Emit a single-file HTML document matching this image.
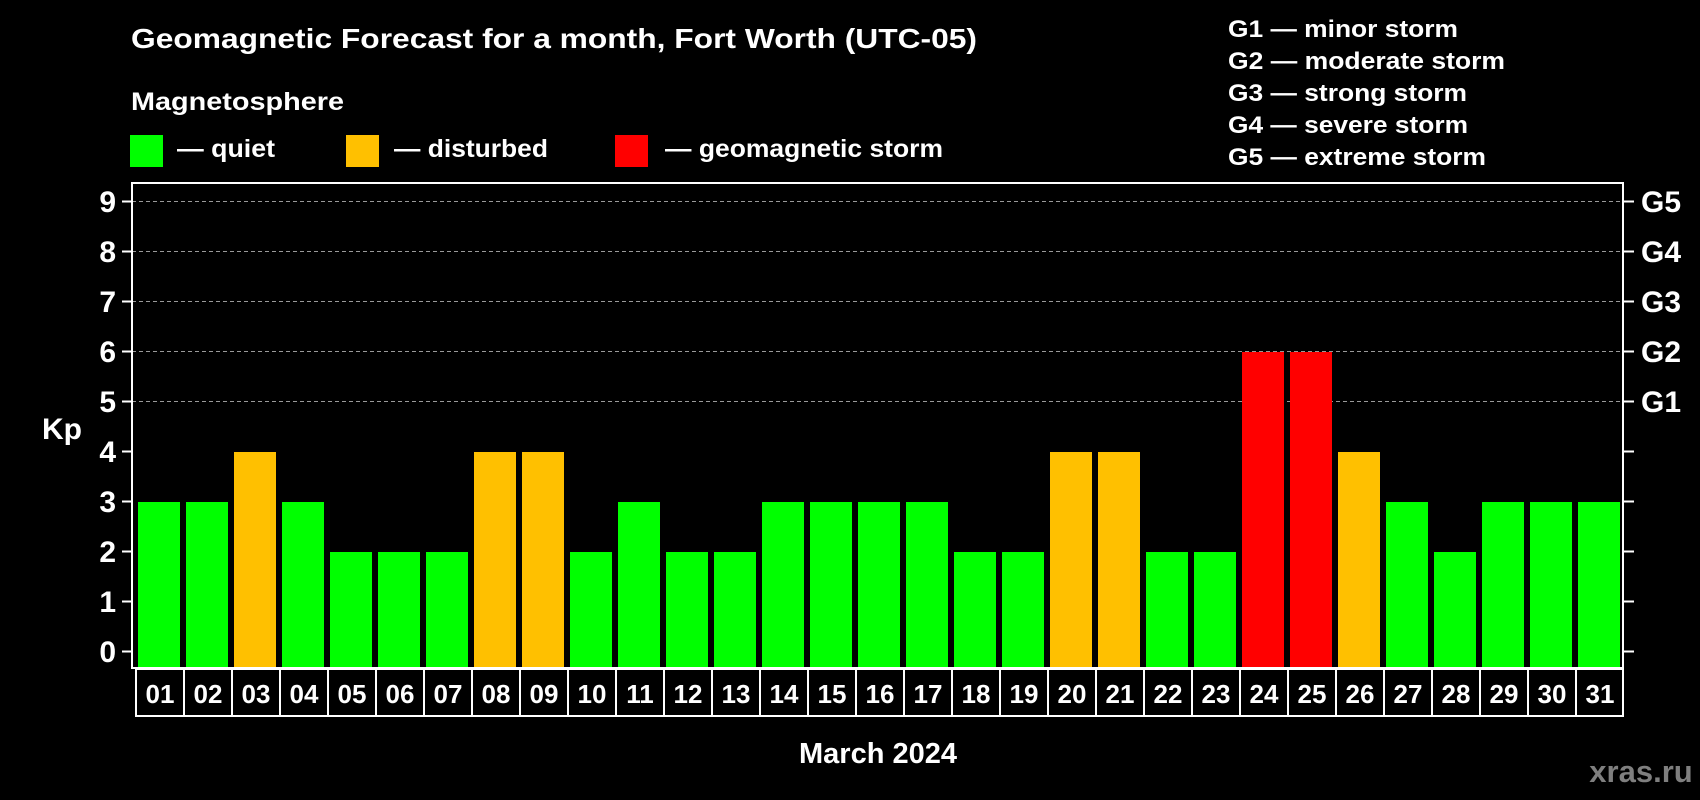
<!DOCTYPE html>
<html><head><meta charset="utf-8"><style>
html,body{margin:0;padding:0;background:#000;}
svg{display:block;}
text{font-family:"Liberation Sans",Arial,sans-serif;font-weight:bold;fill:#fff;}
</style></head><body>
<svg width="1700" height="800" viewBox="0 0 1700 800" xmlns="http://www.w3.org/2000/svg">
<rect width="1700" height="800" fill="#000"/>
<text x="131" y="48" font-size="28" textLength="846" lengthAdjust="spacingAndGlyphs">Geomagnetic Forecast for a month, Fort Worth (UTC-05)</text>
<text x="131" y="110" font-size="25" textLength="213" lengthAdjust="spacingAndGlyphs">Magnetosphere</text>
<rect x="130" y="135" width="33" height="32" fill="#00ff00"/>
<text x="177" y="157" font-size="25" textLength="98" lengthAdjust="spacingAndGlyphs">— quiet</text>
<rect x="346" y="135" width="33" height="32" fill="#ffc000"/>
<text x="394" y="157" font-size="25" textLength="154" lengthAdjust="spacingAndGlyphs">— disturbed</text>
<rect x="615" y="135" width="33" height="32" fill="#ff0000"/>
<text x="665" y="157" font-size="25" textLength="278" lengthAdjust="spacingAndGlyphs">— geomagnetic storm</text>
<g font-size="24">
<text x="1228" y="37" textLength="230" lengthAdjust="spacingAndGlyphs">G1 — minor storm</text>
<text x="1228" y="69" textLength="277" lengthAdjust="spacingAndGlyphs">G2 — moderate storm</text>
<text x="1228" y="101" textLength="239" lengthAdjust="spacingAndGlyphs">G3 — strong storm</text>
<text x="1228" y="133" textLength="240" lengthAdjust="spacingAndGlyphs">G4 — severe storm</text>
<text x="1228" y="165" textLength="258" lengthAdjust="spacingAndGlyphs">G5 — extreme storm</text>
</g>

<g stroke="#9a9a9a" stroke-width="1" stroke-dasharray="4,3">
<line x1="132" x2="1623" y1="201.5" y2="201.5"/>
<line x1="132" x2="1623" y1="251.5" y2="251.5"/>
<line x1="132" x2="1623" y1="301.5" y2="301.5"/>
<line x1="132" x2="1623" y1="351.5" y2="351.5"/>
<line x1="132" x2="1623" y1="401.5" y2="401.5"/>
</g>

<g>
<rect x="138" y="502" width="42" height="166" fill="#00ff00"/>
<rect x="186" y="502" width="42" height="166" fill="#00ff00"/>
<rect x="234" y="452" width="42" height="216" fill="#ffc000"/>
<rect x="282" y="502" width="42" height="166" fill="#00ff00"/>
<rect x="330" y="552" width="42" height="116" fill="#00ff00"/>
<rect x="378" y="552" width="42" height="116" fill="#00ff00"/>
<rect x="426" y="552" width="42" height="116" fill="#00ff00"/>
<rect x="474" y="452" width="42" height="216" fill="#ffc000"/>
<rect x="522" y="452" width="42" height="216" fill="#ffc000"/>
<rect x="570" y="552" width="42" height="116" fill="#00ff00"/>
<rect x="618" y="502" width="42" height="166" fill="#00ff00"/>
<rect x="666" y="552" width="42" height="116" fill="#00ff00"/>
<rect x="714" y="552" width="42" height="116" fill="#00ff00"/>
<rect x="762" y="502" width="42" height="166" fill="#00ff00"/>
<rect x="810" y="502" width="42" height="166" fill="#00ff00"/>
<rect x="858" y="502" width="42" height="166" fill="#00ff00"/>
<rect x="906" y="502" width="42" height="166" fill="#00ff00"/>
<rect x="954" y="552" width="42" height="116" fill="#00ff00"/>
<rect x="1002" y="552" width="42" height="116" fill="#00ff00"/>
<rect x="1050" y="452" width="42" height="216" fill="#ffc000"/>
<rect x="1098" y="452" width="42" height="216" fill="#ffc000"/>
<rect x="1146" y="552" width="42" height="116" fill="#00ff00"/>
<rect x="1194" y="552" width="42" height="116" fill="#00ff00"/>
<rect x="1242" y="352" width="42" height="316" fill="#ff0000"/>
<rect x="1290" y="352" width="42" height="316" fill="#ff0000"/>
<rect x="1338" y="452" width="42" height="216" fill="#ffc000"/>
<rect x="1386" y="502" width="42" height="166" fill="#00ff00"/>
<rect x="1434" y="552" width="42" height="116" fill="#00ff00"/>
<rect x="1482" y="502" width="42" height="166" fill="#00ff00"/>
<rect x="1530" y="502" width="42" height="166" fill="#00ff00"/>
<rect x="1578" y="502" width="42" height="166" fill="#00ff00"/>
</g>

<rect x="132" y="183" width="1491" height="485" fill="none" stroke="#fff" stroke-width="2"/>

<g stroke="#fff" stroke-width="2">
<line x1="122" x2="131" y1="651.5" y2="651.5"/><line x1="1624" x2="1634" y1="651.5" y2="651.5"/>
<line x1="122" x2="131" y1="601.5" y2="601.5"/><line x1="1624" x2="1634" y1="601.5" y2="601.5"/>
<line x1="122" x2="131" y1="551.5" y2="551.5"/><line x1="1624" x2="1634" y1="551.5" y2="551.5"/>
<line x1="122" x2="131" y1="501.5" y2="501.5"/><line x1="1624" x2="1634" y1="501.5" y2="501.5"/>
<line x1="122" x2="131" y1="451.5" y2="451.5"/><line x1="1624" x2="1634" y1="451.5" y2="451.5"/>
<line x1="122" x2="131" y1="401.5" y2="401.5"/><line x1="1624" x2="1634" y1="401.5" y2="401.5"/>
<line x1="122" x2="131" y1="351.5" y2="351.5"/><line x1="1624" x2="1634" y1="351.5" y2="351.5"/>
<line x1="122" x2="131" y1="301.5" y2="301.5"/><line x1="1624" x2="1634" y1="301.5" y2="301.5"/>
<line x1="122" x2="131" y1="251.5" y2="251.5"/><line x1="1624" x2="1634" y1="251.5" y2="251.5"/>
<line x1="122" x2="131" y1="201.5" y2="201.5"/><line x1="1624" x2="1634" y1="201.5" y2="201.5"/>
</g>

<g font-size="30" text-anchor="end">
<text x="116" y="662">0</text><text x="116" y="612">1</text><text x="116" y="562">2</text>
<text x="116" y="512">3</text><text x="116" y="462">4</text><text x="116" y="412">5</text>
<text x="116" y="362">6</text><text x="116" y="312">7</text><text x="116" y="262">8</text>
<text x="116" y="212">9</text>
</g>
<g font-size="30">
<text x="1641" y="412">G1</text><text x="1641" y="362">G2</text><text x="1641" y="312">G3</text>
<text x="1641" y="262">G4</text><text x="1641" y="212">G5</text>
</g>

<g fill="none" stroke="#fff" stroke-width="2">
<rect x="136" y="669" width="1487" height="47"/>
<path d="M184 669V716M232 669V716M280 669V716M328 669V716M376 669V716M424 669V716M472 669V716M520 669V716M568 669V716M616 669V716M664 669V716M712 669V716M760 669V716M808 669V716M856 669V716M904 669V716M952 669V716M1000 669V716M1048 669V716M1096 669V716M1144 669V716M1192 669V716M1240 669V716M1288 669V716M1336 669V716M1384 669V716M1432 669V716M1480 669V716M1528 669V716M1576 669V716"/>
</g>
<g font-size="26" text-anchor="middle">
<text x="160" y="703">01</text><text x="208" y="703">02</text><text x="256" y="703">03</text>
<text x="304" y="703">04</text><text x="352" y="703">05</text><text x="400" y="703">06</text>
<text x="448" y="703">07</text><text x="496" y="703">08</text><text x="544" y="703">09</text>
<text x="592" y="703">10</text><text x="640" y="703">11</text><text x="688" y="703">12</text>
<text x="736" y="703">13</text><text x="784" y="703">14</text><text x="832" y="703">15</text>
<text x="880" y="703">16</text><text x="928" y="703">17</text><text x="976" y="703">18</text>
<text x="1024" y="703">19</text><text x="1072" y="703">20</text><text x="1120" y="703">21</text>
<text x="1168" y="703">22</text><text x="1216" y="703">23</text><text x="1264" y="703">24</text>
<text x="1312" y="703">25</text><text x="1360" y="703">26</text><text x="1408" y="703">27</text>
<text x="1456" y="703">28</text><text x="1504" y="703">29</text><text x="1552" y="703">30</text>
<text x="1600" y="703">31</text>
</g>

<text x="62" y="439" font-size="30" text-anchor="middle">Kp</text>
<text x="878" y="763" font-size="29" text-anchor="middle">March 2024</text>
<text x="1641" y="782" font-size="31" text-anchor="middle" style="fill:#7f7f7f">xras.ru</text>
</svg>
</body></html>
